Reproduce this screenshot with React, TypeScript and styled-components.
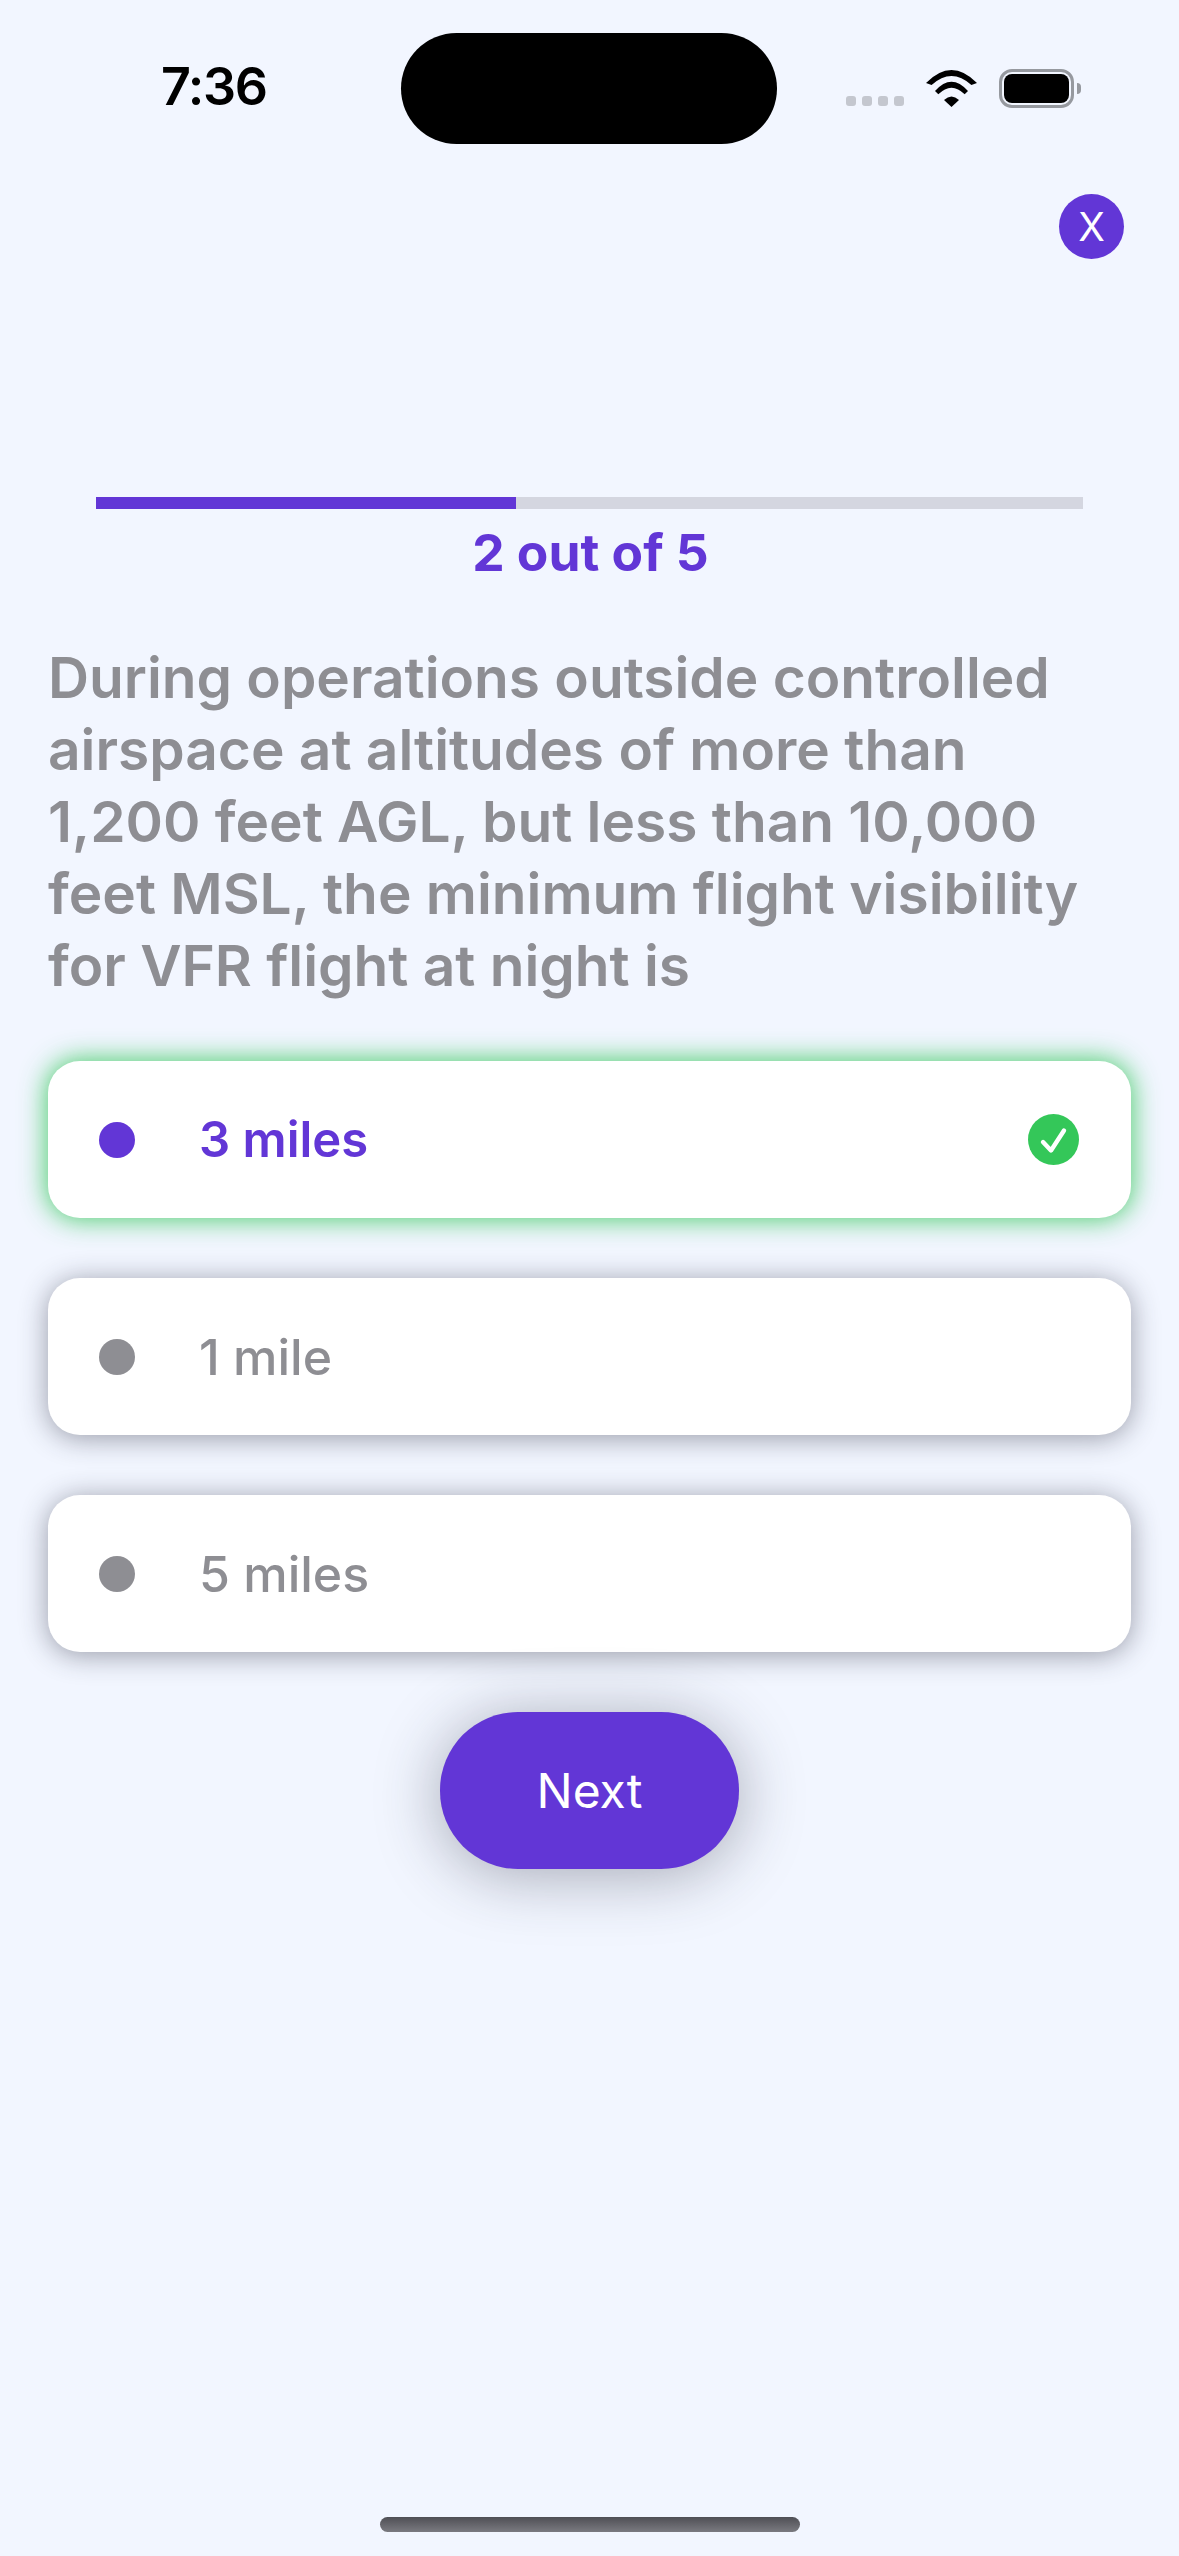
import React from "react";
import styled, { createGlobalStyle } from "styled-components";

const GlobalStyle = createGlobalStyle`
  html, body {
    margin: 0;
    padding: 0;
    background: #F2F6FF;
    font-family: Inter, "Noto Sans", sans-serif;
  }
`;

const options = ["3 miles", "1 mile", "5 miles"];
const selected = "3 miles";

const App: React.FC = () => {
  return (
    <Page>
      <GlobalStyle />
      <StatusBar>
        <Time>7:36</Time>
        <Island />
        <StatusIcons>
          <SignalDots>
            <SignalDot />
            <SignalDot />
            <SignalDot />
            <SignalDot />
          </SignalDots>
          <svg width="51" height="37" viewBox="0 0 51 37">
            <path d="M0 13Q25.5 -13 51 13L45.4 15Q25.5 -3 5.6 15Z" fill="#000" />
            <path d="M9 21Q25.5 2.4 42 21L38.7 24.3Q25.5 11 12.3 24.3Z" fill="#000" />
            <path d="M18 30Q25.5 23 33 30L25.5 37Z" fill="#000" />
          </svg>
          <Battery>
            <BatteryBody>
              <BatteryLevel />
            </BatteryBody>
            <BatteryNub />
          </Battery>
        </StatusIcons>
      </StatusBar>

      <CloseRow>
        <CloseButton>X</CloseButton>
      </CloseRow>

      <ProgressTrack>
        <ProgressFill />
      </ProgressTrack>
      <ProgressLabel>2 out of 5</ProgressLabel>

      <Question>
        During operations outside controlled airspace at altitudes of more than
        1,200 feet AGL, but less than 10,000 feet MSL, the minimum flight
        visibility for VFR flight at night is
      </Question>

      <OptionList>
        {options.map((option) => (
          <OptionCard key={option} $selected={option === selected}>
            <OptionDot $selected={option === selected} />
            <OptionText $selected={option === selected}>{option}</OptionText>
            {option === selected && (
              <CheckIcon width="51" height="51" viewBox="0 0 51 51">
                <circle cx="25.5" cy="25.5" r="25.5" fill="#34C759" />
                <path
                  d="M15 28L23 36.5L36 16.5"
                  fill="none"
                  stroke="#fff"
                  strokeWidth="4.4"
                  strokeLinecap="round"
                  strokeLinejoin="round"
                />
              </CheckIcon>
            )}
          </OptionCard>
        ))}
      </OptionList>

      <NextButton>Next</NextButton>

      <HomeIndicator />
    </Page>
  );
};

const Page = styled.div`
  width: 1179px;
  height: 2556px;
  display: flex;
  flex-direction: column;
  background: #F2F6FF;
  overflow: hidden;
`;

const StatusBar = styled.div`
  display: grid;
  grid-template-columns: 401px 376px 1fr;
  padding-top: 33px;
`;

const Time = styled.div`
  padding: 24px 0 0 161px;
  font-size: 52px;
  font-weight: 600;
  line-height: 60px;
  letter-spacing: -1.4px;
  color: #000;
`;

const Island = styled.div`
  height: 111px;
  background: #000;
  border-radius: 56px;
`;

const StatusIcons = styled.div`
  display: flex;
  align-items: flex-end;
  gap: 22px;
  height: 74px;
  padding-left: 69px;
`;

const SignalDots = styled.div`
  display: flex;
  gap: 6px;
  padding-bottom: 1px;
`;

const SignalDot = styled.div`
  width: 10px;
  height: 10px;
  border-radius: 3px;
  background: #C4C7CF;
`;

const Battery = styled.div`
  display: flex;
  align-items: center;
  gap: 3px;
  margin-bottom: -1px;
`;

const BatteryBody = styled.div`
  box-sizing: border-box;
  width: 75px;
  height: 39px;
  padding: 2px;
  border: 3px solid #96999F;
  border-radius: 13px;
`;

const BatteryLevel = styled.div`
  height: 100%;
  background: #000;
  border-radius: 8px;
`;

const BatteryNub = styled.div`
  width: 4px;
  height: 11px;
  background: #96999F;
  border-radius: 0 6px 6px 0;
`;

const CloseRow = styled.div`
  display: flex;
  justify-content: flex-end;
  margin-top: 50px;
  padding-right: 55px;
`;

const CloseButton = styled.div`
  width: 65px;
  height: 65px;
  display: flex;
  align-items: center;
  justify-content: center;
  border-radius: 50%;
  background: #6236D6;
  color: #fff;
  font-size: 39px;
  font-weight: 400;
  line-height: 1;
`;

const ProgressTrack = styled.div`
  height: 12px;
  margin: 238px 96px 0;
  background: #D4D6E0;
`;

const ProgressFill = styled.div`
  width: 420px;
  height: 100%;
  background: #6236D6;
`;

const ProgressLabel = styled.div`
  margin-top: 13px;
  padding-left: 2px;
  text-align: center;
  font-size: 51.5px;
  font-weight: 700;
  line-height: 60px;
  color: #6236D6;
`;

const Question = styled.div`
  margin-top: 60px;
  padding: 0 90px 0 48px;
  font-size: 56.8px;
  font-weight: 600;
  line-height: 72px;
  color: #8E8E93;
`;

const OptionList = styled.div`
  display: flex;
  flex-direction: column;
  gap: 60px;
  margin-top: 59px;
  padding: 0 48px;
`;

const OptionCard = styled.div<{ $selected: boolean }>`
  box-sizing: border-box;
  height: 157px;
  display: flex;
  align-items: center;
  padding: 0 52px 0 51px;
  background: #fff;
  border-radius: 32px;
  box-shadow: ${(p) =>
    p.$selected
      ? "0 0 26px 2px rgba(52, 199, 89, 0.85)"
      : "0 3px 28px rgba(40, 42, 60, 0.45)"};
`;

const OptionDot = styled.div<{ $selected: boolean }>`
  width: 36px;
  height: 36px;
  flex-shrink: 0;
  border-radius: 50%;
  background: ${(p) => (p.$selected ? "#6236D6" : "#8E8E93")};
`;

const OptionText = styled.div<{ $selected: boolean }>`
  flex: 1;
  margin-left: 64px;
  font-size: ${(p) => (p.$selected ? "49px" : "50px")};
  font-weight: ${(p) => (p.$selected ? 600 : 500)};
  line-height: 60px;
  color: ${(p) => (p.$selected ? "#6236D6" : "#8E8E93")};
`;

const CheckIcon = styled.svg`
  flex-shrink: 0;
`;

const NextButton = styled.div`
  width: 299px;
  height: 157px;
  display: flex;
  align-items: center;
  justify-content: center;
  align-self: center;
  margin-top: 60px;
  background: #6236D6;
  border-radius: 78px;
  box-shadow: 0 6px 64px rgba(40, 42, 60, 0.38);
  color: #fff;
  font-size: 48px;
  font-weight: 400;
`;

const HomeIndicator = styled.div`
  width: 420px;
  height: 15px;
  align-self: center;
  margin-top: auto;
  margin-bottom: 24px;
  border-radius: 8px;
  background: linear-gradient(#4F4F55, #7A7A80);
`;

export default App;
